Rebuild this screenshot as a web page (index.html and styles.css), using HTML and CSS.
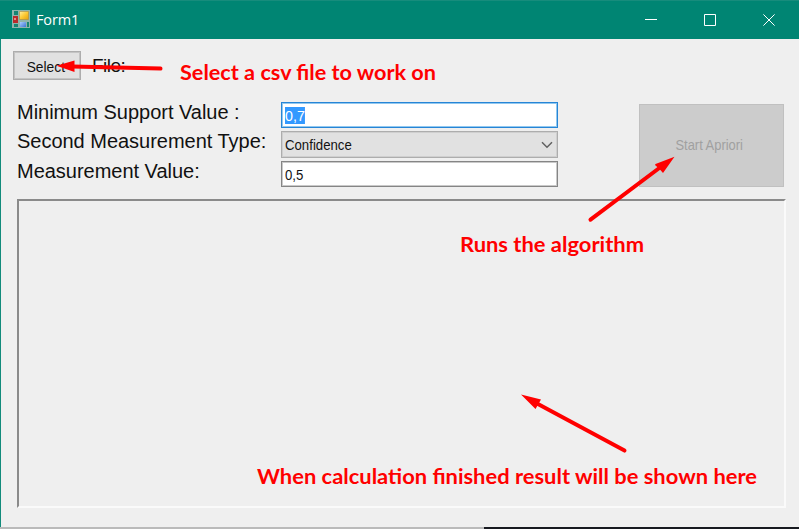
FILE: index.html
```html
<!DOCTYPE html>
<html lang="en">
<head>
<meta charset="utf-8">
<title>Form1</title>
<link rel="stylesheet" href="styles.css">
</head>
<body>
<div class="window">
  <header class="titlebar">
    <svg class="app-icon" width="18" height="18" viewBox="0 0 18 18">
      <defs>
        <linearGradient id="gold" x1="0" y1="0" x2="1" y2="1"><stop offset="0" stop-color="#fff0a0"/><stop offset=".5" stop-color="#fcc934"/><stop offset="1" stop-color="#e5a00a"/></linearGradient>
        <linearGradient id="blue" x1="0" y1="0" x2="1" y2="1"><stop offset="0" stop-color="#a8ceff"/><stop offset="1" stop-color="#3d73d3"/></linearGradient>
      </defs>
      <path fill="#8fb5ac" d="M0 0h18v18H0z"/>
      <path fill="#168573" d="M2 1h4v4H2zM2 14h4v3H2zM15 12h2v5h-2z"/>
      <path fill="#b92b2b" d="M1 6h5v7H1z"/><path fill="#ea8a80" d="M2 8h2v2H2z"/>
      <path fill="url(#gold)" stroke="#b18b35" stroke-width=".6" d="M7.500 1.500h9v8h-9z"/>
      <path fill="url(#blue)" d="M8 12h6v5H8z"/>
    </svg>
    <h1 class="title">Form1</h1>
    <div class="controls">
      <svg width="12" height="12" viewBox="0 0 12 12"><path d="M0 5.500h12"/></svg>
      <svg width="12" height="12" viewBox="0 0 12 12"><path d="M.5.5h11v11H.5z"/></svg>
      <svg width="12" height="12" viewBox="0 0 12 12"><path d="M.4.4l11.200 11.200M11.600.4L.4 11.600"/></svg>
    </div>
  </header>
  <main class="form">
    <div class="file-row">
      <button class="select-button"><span class="narrow">Select</span></button>
      <span class="label">File:</span>
    </div>
    <div class="settings">
      <div class="labels">
        <div class="label">Minimum Support Value :</div>
        <div class="label">Second Measurement Type:</div>
        <div class="label">Measurement Value:</div>
      </div>
      <div class="fields">
        <div class="field focused"><span class="narrow selected">0,7</span></div>
        <div class="field combo"><span class="narrow">Confidence</span>
          <svg width="12" height="8" viewBox="0 0 12 8"><path d="M1 1.200l5 5 5-5"/></svg>
        </div>
        <div class="field"><span class="narrow">0,5</span></div>
      </div>
      <button class="start-button" disabled><span class="narrow">Start Apriori</span></button>
    </div>
    <section class="result"></section>
  </main>
  <footer class="edge"></footer>
</div>
<svg class="notes" width="799" height="529" viewBox="0 0 799 529">
  <g class="shafts">
    <path d="M160.500 68.600L72 66.500"/>
    <path d="M590.500 219.700L660 167.500"/>
    <path d="M624.500 450.600L537 403.500"/>
  </g>
  <path d="M56.500 65.800L74.500 60.500V72zM674.500 156.700L663 173l-3.500-4-4.500-4 .5-1zM521 394.500L541 399.500 535.500 409z"/>
  <text x="180" y="80" textLength="256" lengthAdjust="spacingAndGlyphs">Select a csv file to work on</text>
  <text x="460" y="252" textLength="184" lengthAdjust="spacingAndGlyphs">Runs the algorithm</text>
  <text x="257" y="484" textLength="500" lengthAdjust="spacingAndGlyphs">When calculation finished result will be shown here</text>
</svg>
</body>
</html>
```
FILE: styles.css
```css
* { box-sizing: border-box; }
body { margin: 0; overflow: hidden; font-family: "Liberation Sans", sans-serif; color: #111; }
button { font: inherit; color: inherit; padding: 0; }
.window { width: 799px; height: 529px; display: flex; flex-direction: column; background: #efefef; }
.titlebar { height: 39px; flex: none; display: flex; align-items: center; padding: 0 24px 0 12px; background: #008573; border-top: 1px solid #178c7c; color: #fff; }
.app-icon { display: block; margin-top: -2px; }
.title { margin: -1px 0 0 6px; font: 400 14.500px "Open Sans", sans-serif; letter-spacing: -.15px; }
.controls { margin-left: auto; display: flex; gap: 47px; }
.controls svg { display: block; fill: none; stroke: #fff; stroke-width: 1; }
.form { flex: 1; border-left: 1px solid #128b7b; padding: 12px 13px 0 12px; }
.file-row { display: flex; gap: 11px; height: 29px; }
.select-button { width: 68px; height: 29px; border: 1px solid #adadad; outline: 1px solid #c4c4c4; outline-offset: -2px; background: #e1e1e1; }
.label { font-size: 20px; line-height: 29px; letter-spacing: -.02px; white-space: nowrap; }
.file-row .label { font-size: 19px; letter-spacing: -.5px; }
.narrow { display: inline-block; font-size: 15px; line-height: 17px; transform: scaleX(.88); white-space: nowrap; }
.select-button .narrow { transform: translate(-1px, 1px) scaleX(.92); }
.settings { display: flex; height: 87px; margin-top: 22px; }
.labels { width: 268px; padding-left: 4px; margin-top: -4px; }
.labels .label:last-child { margin-top: 1px; }
.fields { width: 277px; display: flex; flex-direction: column; gap: 3px; }
.field { height: 26px; border: 1px solid #858585; outline: 1px solid #c9c9c9; outline-offset: -2px; background: #fff; padding: 0 4px 0 3px; display: flex; align-items: center; }
.field .narrow { transform-origin: left; }
.field .selected { background: #3399ff; color: #fff; transform: scaleX(.95); }
.focused { border-color: #2685d6; outline-color: #92c8ef; }
.combo { height: 27px; justify-content: space-between; background: #e1e1e1; border-color: #adadad; outline-color: #cfcfcf; }
.combo svg { fill: none; stroke: #606060; stroke-width: 1.500; }
.start-button { width: 145px; height: 83px; margin: 2px 0 0 81px; border: 1px solid #c0c0c0; background: #ccc; color: #a0a0a0; }
.start-button .narrow { transform: translate(-2px, -1px) scaleX(.86); }
.result { width: 769px; height: 309px; margin: 10px 0 0 4px; border: 2px solid; border-color: #8a8a8a #fafafa #fafafa #8a8a8a; }
.edge { height: 2px; flex: none; background: linear-gradient(90deg, #bababa 484px, #171a20 484px); }
.notes { position: absolute; left: 0; top: 0; fill: red; font: 700 21.500px Lato, sans-serif; }
.shafts { stroke: red; stroke-width: 4; stroke-linecap: round; }
```
